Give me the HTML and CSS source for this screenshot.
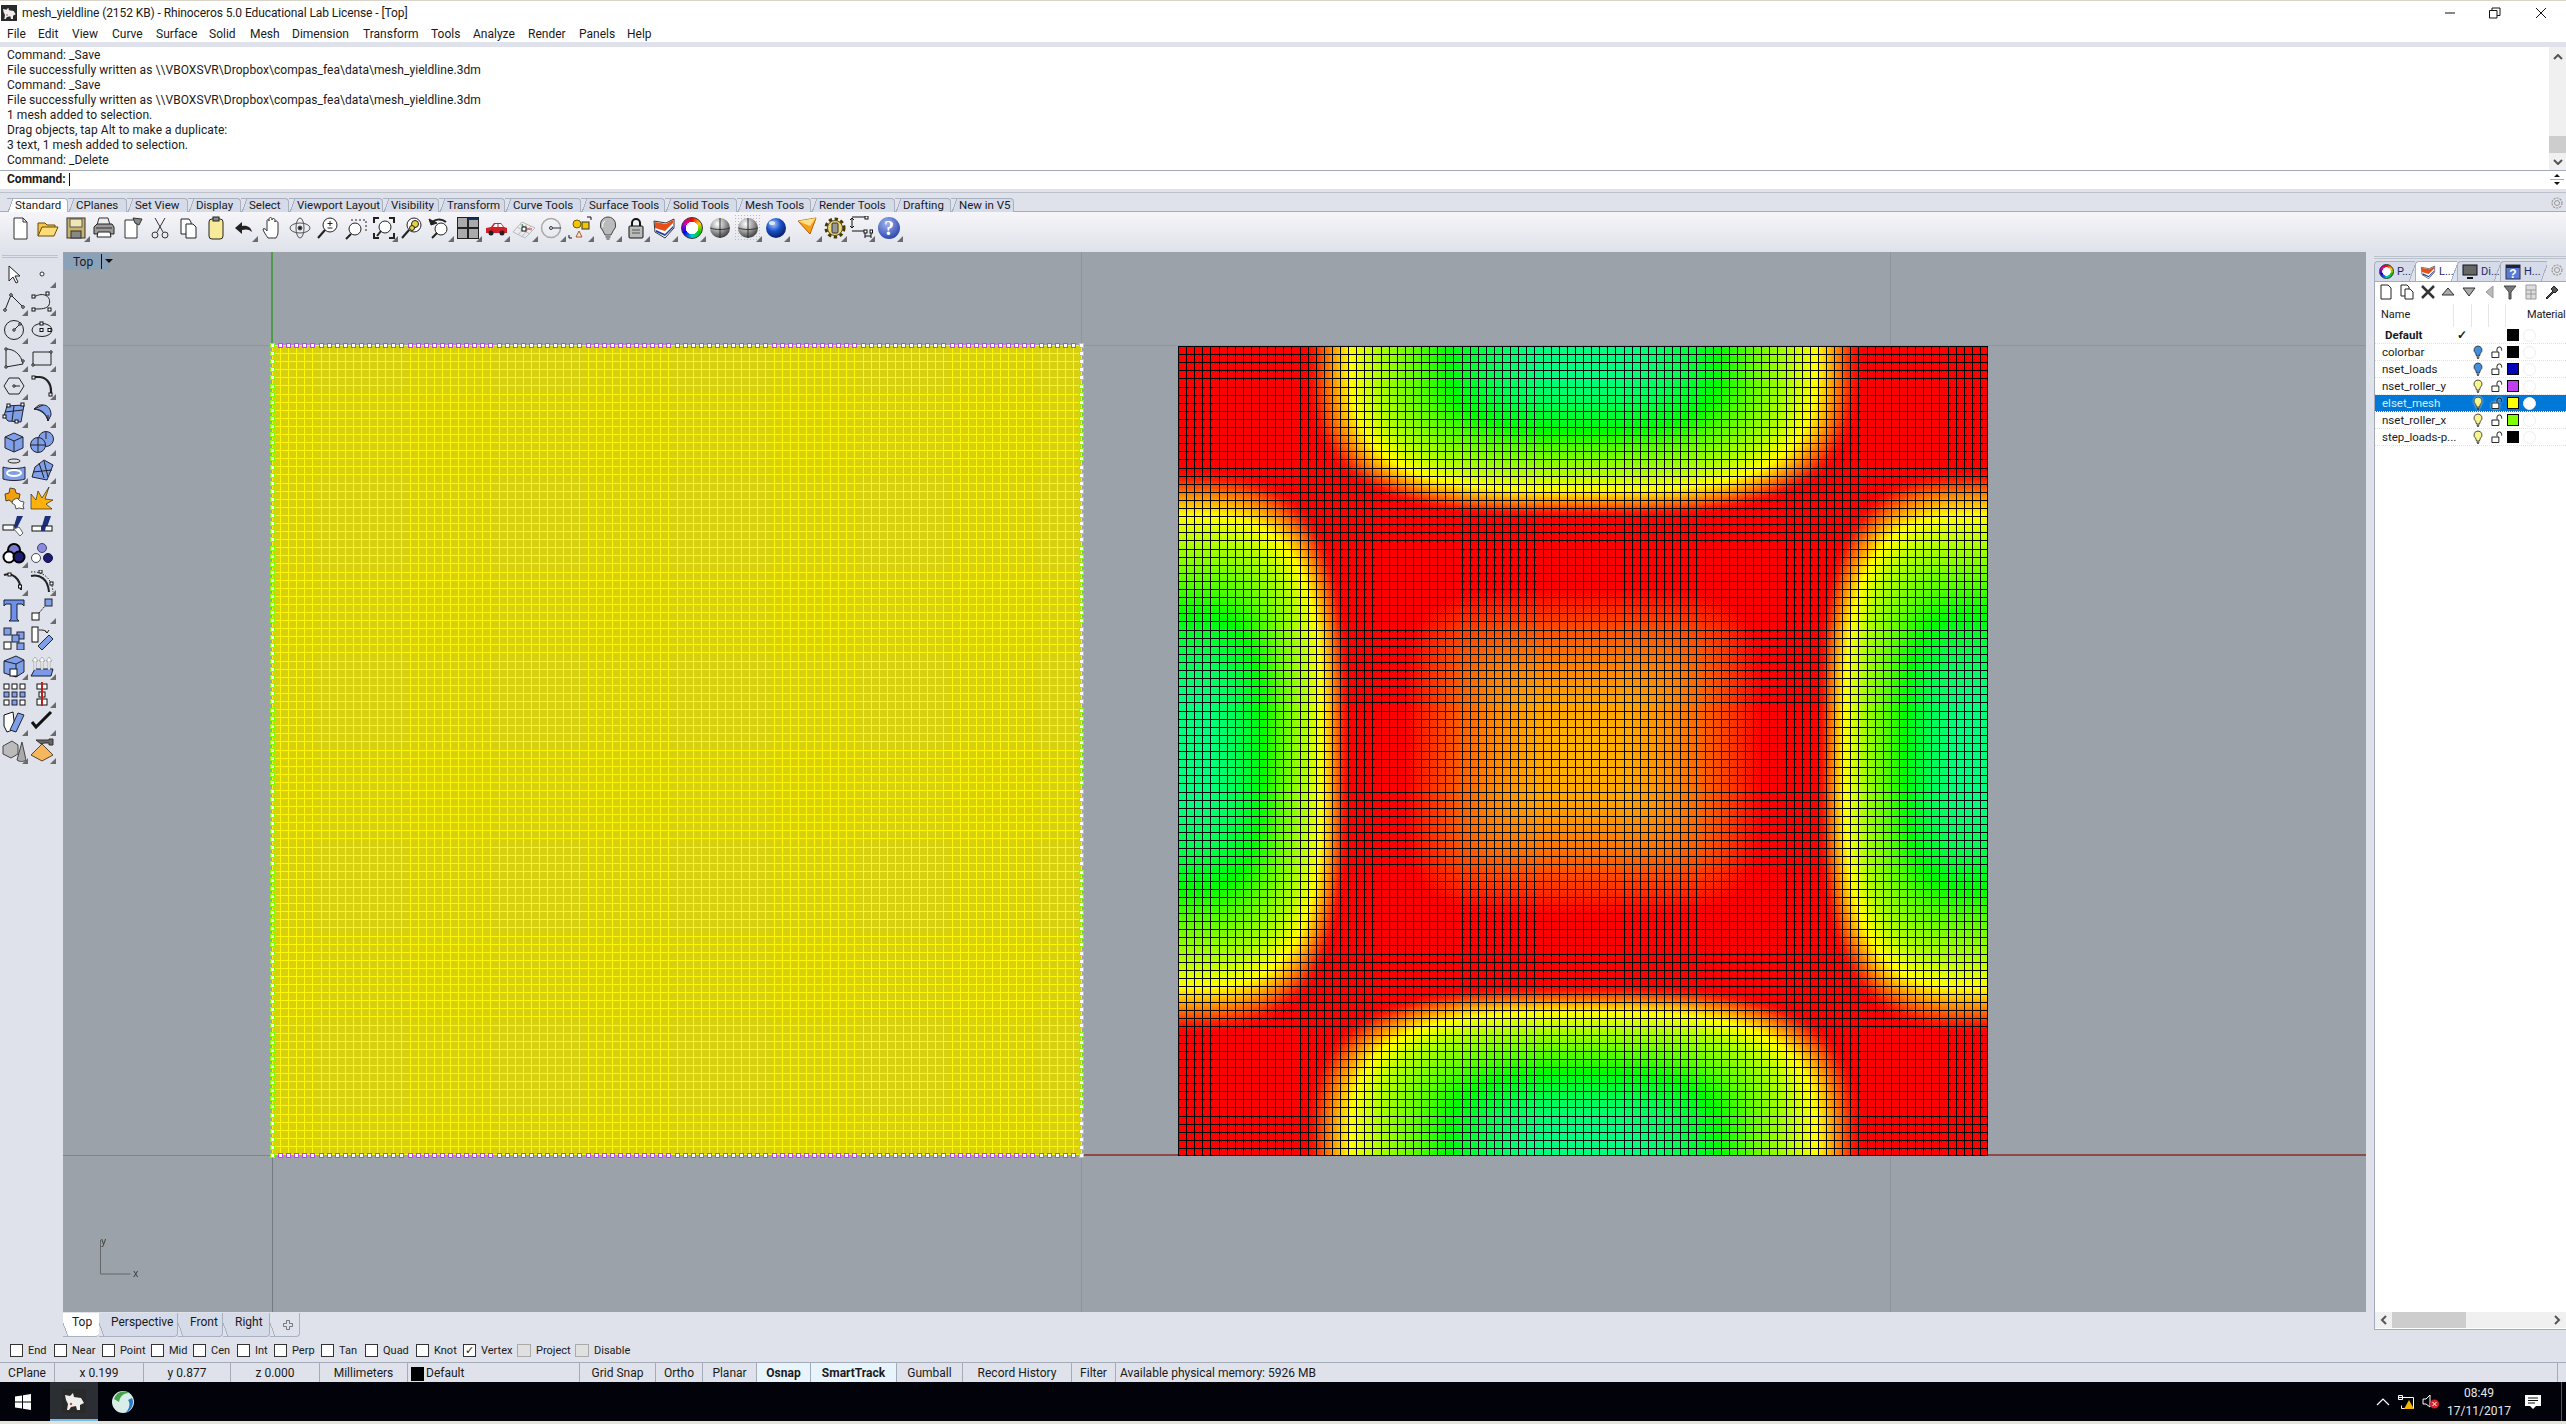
FILE: index.html
```html
<!DOCTYPE html>
<html lang="en">
<head>
  <meta charset="UTF-8" />
  <title>mesh_yieldline (2152 KB) - Rhinoceros 5.0 Educational Lab License - [Top]</title>
  <link rel="stylesheet" href="styles.css">
</head>
<body>
  <!-- shared gradients and repeated glyphs -->
  <svg class="defs" width="0" height="0">
    <defs>
      <radialGradient id="gs" cx=".38" cy=".3" r=".8"><stop offset="0" stop-color="#fff"/><stop offset=".5" stop-color="#9a9a9a"/><stop offset="1" stop-color="#2a2a2a"/></radialGradient>
      <radialGradient id="gb" cx=".38" cy=".3" r=".8"><stop offset="0" stop-color="#a8ccff"/><stop offset=".45" stop-color="#1a50c8"/><stop offset="1" stop-color="#04124c"/></radialGradient>
      <radialGradient id="gh" cx=".4" cy=".3" r=".8"><stop offset="0" stop-color="#9fb4f4"/><stop offset="1" stop-color="#1f3aa4"/></radialGradient>
      <symbol id="bulb" viewBox="0 0 10 14"><path d="M5 1a4 4 0 0 0-2.4 7.2L3.5 11h3L7.4 8.2A4 4 0 0 0 5 1z" stroke="#222" stroke-width=".8"/><path d="M3.7 12.2h2.600M4.2 13.400h1.600" stroke="#222" fill="none"/></symbol>
      <symbol id="lock" viewBox="0 0 13 13"><path d="M1 6.5h7.5V12.500H1z" fill="#fff" stroke="#111"/><path d="M6.5 6V3.500a2.500 2.500 0 0 1 5 0V5" fill="none" stroke="#111"/></symbol>
      <symbol id="rhino" viewBox="0 0 24 24"><rect width="24" height="24" fill="#2a2a2a"/><path d="M3 6l5 1 3-3 1 4 7 1 3 5-4 2v5h-3l-1-4-5 1-2 3H5l1-6-2-4z" fill="#eee"/><circle cx="9" cy="15" r="1.2" fill="#c44"/></symbol>
    </defs>
  </svg>

  <header class="titlebar">
    <svg class="app-icon" width="16" height="16"><use href="#rhino"/></svg>
    <span class="title-text">mesh_yieldline (2152 KB) - Rhinoceros 5.0 Educational Lab License - [Top]</span>
    <div class="win-controls">
      <svg width="12" height="12"><path d="M1 6h10" stroke="#111"/></svg>
      <svg width="12" height="12"><path d="M.5 3.5h7.5v7.5H.5zM3 3.500V1h8v7.500H8" fill="none" stroke="#111"/></svg>
      <svg width="12" height="12"><path d="M1 1l10 10M11 1L1 11" stroke="#111"/></svg>
    </div>
  </header>

  <nav class="menubar">
    <span>File</span><span>Edit</span><span>View</span><span>Curve</span><span>Surface</span><span>Solid</span><span>Mesh</span><span>Dimension</span><span>Transform</span><span>Tools</span><span>Analyze</span><span>Render</span><span>Panels</span><span>Help</span>
  </nav>

  <section class="console">
    <div class="console-log">
      <div>Command: _Save</div>
      <div>File successfully written as \\VBOXSVR\Dropbox\compas_fea\data\mesh_yieldline.3dm</div>
      <div>Command: _Save</div>
      <div>File successfully written as \\VBOXSVR\Dropbox\compas_fea\data\mesh_yieldline.3dm</div>
      <div>1 mesh added to selection.</div>
      <div>Drag objects, tap Alt to make a duplicate:</div>
      <div>3 text, 1 mesh added to selection.</div>
      <div>Command: _Delete</div>
    </div>
    <div class="vscroll">
      <svg width="10" height="6"><path d="M1 5l4-4 4 4" fill="none" stroke="#555" stroke-width="2"/></svg>
      <div class="vthumb"></div>
      <svg width="10" height="6"><path d="M1 1l4 4 4-4" fill="none" stroke="#555" stroke-width="2"/></svg>
    </div>
  </section>
  <div class="command-row">
    <b>Command:</b><i class="caret"></i>
    <div class="spinner"><svg width="14" height="16"><path d="M4 6l3-3 3 3zM4 11l3 3 3-3z" fill="#111"/><path d="M0 8.5h14" stroke="#aab"/></svg></div>
  </div>

  <div class="tabstrip">
    <span class="tab active">Standard</span><span class="tab">CPlanes</span><span class="tab">Set View</span><span class="tab">Display</span><span class="tab">Select</span><span class="tab">Viewport Layout</span><span class="tab">Visibility</span><span class="tab">Transform</span><span class="tab">Curve Tools</span><span class="tab">Surface Tools</span><span class="tab">Solid Tools</span><span class="tab">Mesh Tools</span><span class="tab">Render Tools</span><span class="tab">Drafting</span><span class="tab">New in V5</span>
    <svg class="gear" width="14" height="14" viewBox="0 0 14 14"><circle cx="7" cy="7" r="5" fill="none" stroke="#999" stroke-width="1.2" stroke-dasharray="2.2 1"/><circle cx="7" cy="7" r="2.5" fill="none" stroke="#999"/></svg>
  </div>

  <div class="toolbar">
    <span class="tool"><svg width="24" height="24"><path d="M6 2h9l4 4v17H6z" fill="#fff" stroke="#333"/><path d="M15 2v4h4" fill="none" stroke="#333"/></svg></span>
    <span class="tool"><svg width="24" height="24"><path d="M2 20V7h7l2 2h8v3" fill="#f4c64a" stroke="#6b4a00"/><path d="M2 20l4-9h16l-4 9z" fill="#fbdc78" stroke="#6b4a00"/></svg></span>
    <span class="tool fly"><svg width="24" height="24"><rect x="3" y="2" width="18" height="20" fill="#c9b26a" stroke="#333"/><rect x="6" y="3" width="12" height="8" fill="#efe6b8" stroke="#555"/><rect x="7" y="15" width="10" height="7" fill="#888" stroke="#333"/></svg></span>
    <span class="tool"><svg width="24" height="24"><path d="M7 2h9l2 7H5z" fill="#eee" stroke="#333"/><path d="M2 11l3-3h15l2 3v7H2z" fill="#999" stroke="#222"/><path d="M6 16h12l1 5H5z" fill="#fff" stroke="#222"/><path d="M4 12h16" stroke="#333"/></svg></span>
    <span class="tool"><svg width="24" height="24"><path d="M5 4h12v18H5z" fill="#fff" stroke="#333"/><path d="M13 2l9 1-3 6-4-2z" fill="#888" stroke="#333"/></svg></span>
    <span class="tool"><svg width="24" height="24" fill="none" stroke="#333"><path d="M7 2l8 14M17 2L9 16"/><circle cx="7" cy="19" r="3"/><circle cx="17" cy="19" r="3"/></svg></span>
    <span class="tool"><svg width="24" height="24"><path d="M5 3h8l2 3v12H5z" fill="#fff" stroke="#222"/><path d="M10 8h7l3 3v11H10z" fill="#fff" stroke="#222"/></svg></span>
    <span class="tool"><svg width="24" height="24"><rect x="5" y="3" width="14" height="20" rx="3" fill="#f7ea9a" stroke="#222"/><rect x="9" y="1" width="6" height="4" fill="#888" stroke="#222"/></svg></span>
    <span class="tool fly"><svg width="24" height="24"><path d="M3 12l7-6v4c5-1 9 1 10 6-3-3-6-3-10-2v4z" fill="#222"/></svg></span>
    <span class="tool"><svg width="24" height="24"><path d="M8 22c-2-3-5-7-5-9 1-1 3 0 4 2V5c0-2 2-2 2 0V3c0-2 3-2 3 0v1c0-2 3-2 3 0v2c0-2 3-1 3 1v9c0 3-1 4-2 6z" fill="#fff" stroke="#333"/></svg></span>
    <span class="tool"><svg width="24" height="24" fill="none" stroke="#555"><ellipse cx="12" cy="12" rx="10" ry="5"/><ellipse cx="12" cy="12" rx="4" ry="10"/><circle cx="12" cy="12" r="2" fill="#222"/></svg></span>
    <span class="tool"><svg width="24" height="24" fill="none" stroke="#222"><circle cx="14" cy="9" r="7" fill="#fff"/><path d="M9 14l-7 8" stroke-width="2"/><path d="M14 5v5M11.5 7.5h5M11.5 12h5" /></svg></span>
    <span class="tool"><svg width="24" height="24" fill="none" stroke="#222"><path d="M7 4h15v13" stroke-dasharray="2 2"/><circle cx="11" cy="13" r="6" fill="#fff"/><path d="M7 18l-5 5" stroke-width="2"/></svg></span>
    <span class="tool fly"><svg width="24" height="24" fill="none" stroke="#222"><path d="M2 7V2h5M17 2h5v5M22 17v5h-5M7 22H2v-5" stroke-width="2"/><circle cx="13" cy="11" r="6" fill="#fff"/><path d="M9 15l-4 5" stroke-width="2"/></svg></span>
    <span class="tool"><svg width="24" height="24" fill="none" stroke="#222"><circle cx="14" cy="9" r="7" fill="#fff"/><path d="M9 14l-7 8" stroke-width="2"/><circle cx="15" cy="8" r="3.5" fill="#e8d040"/><circle cx="12" cy="12" r="2.5" fill="#e8d040"/></svg></span>
    <span class="tool fly"><svg width="24" height="24" fill="none" stroke="#222"><circle cx="13" cy="13" r="6" fill="#fff"/><path d="M9 17l-5 5" stroke-width="2"/><path d="M3 8c3-5 10-6 15-2" stroke-width="2"/><path d="M1 3l2 6 6-2z" fill="#222"/></svg></span>
    <span class="tool fly"><svg width="24" height="24"><rect x="1.5" y="1.5" width="21" height="21" fill="#aaa" stroke="#222"/><path d="M12 1v22M1 12h22" stroke="#222" stroke-width="2"/><rect x="12" y="2" width="10" height="2" fill="#136"/></svg></span>
    <span class="tool fly"><svg width="24" height="24"><path d="M2 17v-5l5-1 3-4h7l3 4 3 1v5z" fill="#d0202a"/><path d="M11 8h2.5v3H9zM14.5 8H17l2 3h-4.500z" fill="#fff"/><circle cx="7" cy="17" r="2.5" fill="#222"/><circle cx="18" cy="17" r="2.5" fill="#222"/></svg></span>
    <span class="tool fly"><svg width="24" height="24" fill="none" stroke="#bbb"><path d="M1 16l9-10 13 6-10 10zM5 11l13 7M8 8.500l12 6M6 19l9-11M10 20.500L19 10"/><path d="M12 13h8" stroke="#d33"/><path d="M12 13l-2-5" stroke="#393"/><rect x="10" y="11" width="4" height="4" fill="#fff" stroke="#111"/></svg></span>
    <span class="tool fly"><svg width="24" height="24" fill="none" stroke="#888"><circle cx="11" cy="12" r="9.5" stroke="#aaa" stroke-width="1.5"/><circle cx="11" cy="12" r="1.5" stroke="#333"/><path d="M13 12h8" stroke="#333"/></svg></span>
    <span class="tool fly"><svg width="24" height="24"><circle cx="9" cy="8" r="4" fill="#f3c700" stroke="#7a5a00"/><rect x="14" y="6" width="7" height="7" fill="#f3c700" stroke="#333"/><path d="M11 15l3 6H8z" fill="none" stroke="#b4561c"/><path d="M19 1h4v3M1 19v3h3" fill="none" stroke="#111"/></svg></span>
    <span class="tool fly"><svg width="24" height="24"><path d="M12 1a8 8 0 0 0-5 14l2 4h6l2-4a8 8 0 0 0-5-14z" fill="#bbb" stroke="#444"/><path d="M9.5 21h5M10.500 23h3" stroke="#333"/><path d="M9 5c-2 1-3 4-2 6" stroke="#fff" fill="none"/></svg></span>
    <span class="tool fly"><svg width="24" height="24"><path d="M8 10V7a4 4 0 0 1 8 0v3" fill="none" stroke="#111" stroke-width="2"/><rect x="5" y="10" width="14" height="12" rx="1" fill="#bbb" stroke="#111"/><path d="M8 14h8M8 17h8" stroke="#555"/></svg></span>
    <span class="tool fly"><svg width="24" height="24"><path d="M2 5l12 2 8-4v9l-9 10-10-6z" fill="#fff" stroke="#333"/><path d="M3 6l11 2 7-4v3l-8 8-10-3z" fill="#e84e18"/><path d="M4 14l9 4 8-8v2l-8 8-9-4z" fill="#2040a0"/></svg></span>
    <span class="tool fly"><i class="wheel"></i></span>
    <span class="tool"><svg width="24" height="24"><circle cx="12" cy="12" r="10" fill="url(#gs)"/><path d="M12 2v20M2.5 12c5 2 14 2 19 0" stroke="#333" fill="none"/></svg></span>
    <span class="tool fly dotted"><svg width="24" height="24"><circle cx="12" cy="12" r="10" fill="url(#gs)"/><path d="M12 2v20M2.5 12c5 2 14 2 19 0" stroke="#333" fill="none"/></svg></span>
    <span class="tool fly"><svg width="24" height="24"><circle cx="12" cy="12" r="10" fill="url(#gb)"/><ellipse cx="8" cy="7" rx="3" ry="2" fill="#dbe8ff"/></svg></span>
    <span class="tool fly gap"><svg width="24" height="24"><path d="M2 5l18-3-6 16z" fill="#f6a019" stroke="#b45f00"/><path d="M2 5l18-3-6 8z" fill="#fbe08a"/></svg></span>
    <span class="tool fly narrow"><svg width="24" height="24" viewBox="0 0 24 24"><circle cx="12" cy="12" r="8" fill="#e8c84a" stroke="#4a3a00" stroke-width="5" stroke-dasharray="3 2.3"/><circle cx="12" cy="12" r="7.5" fill="#f0d870" stroke="#554"/><rect x="9" y="7" width="6" height="10" rx="1" fill="#999" stroke="#333"/></svg></span>
    <span class="tool fly"><svg width="24" height="24" fill="none" stroke="#111"><path d="M3 2v10M1 4l2-2 2 2M1 10l2 2 2-2"/><path d="M3 1h14M3 15h13M16 15v7M22 15v7M16 20h6"/><rect x="16" y="0" width="3" height="3" fill="#fff"/><rect x="15" y="14" width="3" height="3" fill="#fff"/><rect x="21" y="14" width="2.5" height="3" fill="#fff"/></svg></span>
    <span class="tool fly"><svg width="24" height="24"><circle cx="12" cy="12" r="11" fill="url(#gh)"/><text x="12" y="19" class="help-q">?</text></svg></span>
  </div>

  <main class="workspace">
    <aside class="sidebar">
      <div class="grip"></div>
      <div class="side-tools">
        <span class="tool"><svg width="24" height="24"><path d="M7 4v15l4-4 3 6 2-1-3-6h5z" fill="#fff" stroke="#222"/></svg></span>
        <span class="tool fly"><svg width="24" height="24"><circle cx="12" cy="12" r="2" fill="#fff" stroke="#333"/></svg></span>
        <span class="tool fly"><svg class="ln" width="24" height="24"><path d="M3 20L9 5l12 12"/><circle cx="3" cy="20" r="1.3" class="nd"/><circle cx="9" cy="5" r="1.3" class="nd"/><circle cx="21" cy="17" r="1.3" class="nd"/></svg></span>
        <span class="tool fly"><svg class="ln" width="24" height="24"><path d="M4 7c10-6 18 0 15 8-2 4-8 4-15 4"/><rect x="2" y="5" width="3" height="3" class="nd"/><rect x="16" y="2" width="3" height="3" class="nd"/><rect x="2" y="18" width="3" height="3" class="nd"/><rect x="18" y="18" width="3" height="3" class="nd"/></svg></span>
        <span class="tool fly"><svg class="ln" width="24" height="24"><circle cx="12" cy="12" r="9.5"/><path d="M12 12l6-6"/><circle cx="12" cy="12" r="1.2" class="nd"/><circle cx="18" cy="6" r="1.2" class="nd"/></svg></span>
        <span class="tool fly"><svg class="ln" width="24" height="24"><ellipse cx="12" cy="12" rx="10" ry="6.5"/><rect x="10" y="4" width="3" height="3" class="nd"/><rect x="10" y="10.5" width="3" height="3" class="nd"/><rect x="18" y="10.5" width="3" height="3" class="nd"/></svg></span>
        <span class="tool fly"><svg class="ln" width="24" height="24"><path d="M4 3c8 0 15 5 17 15L4 21z"/><circle cx="4" cy="3" r="1.2" class="nd"/><circle cx="21" cy="15" r="1.2" class="nd"/><circle cx="4" cy="21" r="1.2" class="nd"/></svg></span>
        <span class="tool fly"><svg class="ln" width="24" height="24"><path d="M3 6h18v13H3z"/><circle cx="3" cy="19" r="1.2" class="nd"/><circle cx="21" cy="6" r="1.2" class="nd"/></svg></span>
        <span class="tool fly"><svg class="ln" width="24" height="24"><path d="M7 4h10l5 8-5 8H7l-5-8z"/><path d="M12 12h6"/><circle cx="12" cy="12" r="1.2" class="nd"/></svg></span>
        <span class="tool fly"><svg class="ln" width="24" height="24"><path d="M4 3h5c7 0 12 6 12 14v3" stroke-width="2.2"/><rect x="2" y="2" width="3" height="3" class="nd"/><rect x="19" y="19" width="3" height="3" class="nd"/></svg></span>
        <span class="tool fly"><svg class="ln" width="24" height="24"><path d="M5 4l17-1-3 17-13-1L2 14z" class="bl"/><path d="M3 10l18-2M12 4l-2 15"/><rect x="5" y="2" width="3" height="3" class="nd"/><rect x="19" y="1" width="3" height="3" class="nd"/><rect x="1" y="13" width="3" height="3" class="nd"/><rect x="13" y="18" width="3" height="3" class="nd"/></svg></span>
        <span class="tool fly"><svg class="ln" width="24" height="24"><path d="M4 7l9-4c5 0 8 4 8 10l-3 6c-1-6-5-12-14-12z" class="bl"/><path d="M4 7l5-4 4 0M18 19V13M4 7c7 1 12 5 14 12"/></svg></span>
        <span class="tool fly"><svg class="ln" width="24" height="24"><path d="M3 7l9-4 9 4v11l-9 4-9-4z" class="bl"/><path d="M3 7l9 4 9-4M12 11v11"/></svg></span>
        <span class="tool fly"><svg class="ln" width="24" height="24"><circle cx="16" cy="9" r="7.5" class="bl"/><circle cx="8" cy="15" r="7.5" class="bl"/><path d="M.5 15h15M8 8v14M16 2v7"/></svg></span>
        <span class="tool fly"><svg class="ln" width="24" height="24"><ellipse cx="12" cy="3" rx="6" ry="2"/><path d="M1 9c6 2 16 2 22 0v12c-6 2-16 2-22 0z" class="bl"/><ellipse cx="12" cy="15" rx="7" ry="3" stroke="#fff" stroke-width="2"/></svg></span>
        <span class="tool fly"><svg class="ln" width="24" height="24"><path d="M5 9l9-7 9 5-6 15L2 19z" class="bl"/><path d="M3 14l19-2M9 5l5 15M14 3l4 16"/></svg></span>
        <span class="tool"><svg width="24" height="24"><path d="M3 8l4-1 1-5 5 1 1 4 4 1-1 5-4 1-2 3-4-3-3 1z" fill="#f0a010" stroke="#543"/><path d="M11 14l4-2 3 3 4 1-1 4 1 3-5-1-3 1-1-4-3-2z" fill="#fff" stroke="#555"/></svg></span>
        <span class="tool"><svg width="24" height="24"><path d="M1 23V8l5 6 2-9 4 7 7-11-4 12 8 1-7 4 6 5z" fill="#fdb10a" stroke="#111" stroke-width=".6"/></svg></span>
        <span class="tool"><svg width="24" height="24"><path d="M12 12l3-10h6l-7 14z" fill="#1c2f7a"/><rect x="1" y="11" width="11" height="5" fill="#fff" stroke="#111"/><path d="M12 15l5-2 4 6-3 3z" fill="#fff" stroke="#666"/></svg></span>
        <span class="tool"><svg width="24" height="24"><path d="M12 12l3-10h6l-5 14h-5z" fill="#1c2f7a"/><rect x="2" y="12" width="20" height="5" fill="#fff" stroke="#111"/><path d="M11 12h5l-1 5h-4z" fill="#1c2f7a"/></svg></span>
        <span class="tool fly"><svg width="24" height="24"><circle cx="12" cy="8" r="6" fill="#7a7ad0" stroke="#000" stroke-width="2"/><circle cx="7" cy="15" r="5.5" fill="#fff" stroke="#000" stroke-width="2"/><circle cx="17" cy="15" r="5.5" fill="#1c1c70" stroke="#000" stroke-width="2"/></svg></span>
        <span class="tool"><svg width="24" height="24"><circle cx="12" cy="6" r="4.5" fill="#8a8ae0" stroke="#446"/><circle cx="6" cy="16" r="4.5" fill="#fff" stroke="#446"/><circle cx="18" cy="16" r="4.5" fill="#1c1c70" stroke="#114"/></svg></span>
        <span class="tool fly"><svg class="ln" width="24" height="24"><path d="M2 5c8-3 16 3 17 15" stroke-width="2"/><rect x="6" y="3" width="3" height="3" class="nd"/><rect x="16.5" y="15" width="3" height="3" class="nd"/></svg></span>
        <span class="tool fly"><svg class="ln" width="24" height="24"><path d="M1 6c9-2 17 3 18 16" stroke-width="2"/><path d="M1 2c9-1 21 4 22 20" stroke-dasharray="1.5 1.5"/><rect x="9" y="0" width="3" height="3" class="nd"/><rect x="20" y="12" width="3" height="3" class="nd"/></svg></span>
        <span class="tool"><svg width="24" height="24"><path d="M2 2h20v6l-2-2h-5v15l2 2H7l2-2V6H4L2 8z" fill="#6f90ea" stroke="#123"/></svg></span>
        <span class="tool fly"><svg class="ln" width="24" height="24"><rect x="15" y="1" width="7" height="7" class="bl"/><rect x="2" y="15" width="7" height="7" class="nd"/><path d="M9 15l6-7" stroke-dasharray="2 1"/></svg></span>
        <span class="tool"><svg class="ln" width="24" height="24"><rect x="2" y="2" width="7" height="7" class="bl"/><rect x="15" y="6" width="7" height="7" class="bl"/><rect x="10" y="9" width="7" height="7" class="bl"/><rect x="2" y="16" width="7" height="7" class="nd"/><rect x="15" y="17" width="7" height="7" class="bl"/></svg></span>
        <span class="tool"><svg class="ln" width="24" height="24"><rect x="2" y="1" width="6" height="15" class="nd"/><path d="M9 4c4 0 7 0 8 3M15 5l2 2 2-3"/><path d="M8 20L19 9l4 4-11 11z" class="bl"/></svg></span>
        <span class="tool fly"><svg class="ln" width="24" height="24"><path d="M2 7l12-5 8 4v12l-8 5-12-4z" class="bl"/><path d="M2 7l12 3 8-4M14 10v13"/><rect x="8" y="15" width="7" height="7" class="nd"/></svg></span>
        <span class="tool fly"><svg width="24" height="24"><path d="M1 22l4-7h18l-2 7z" fill="#7a9aec" stroke="#123"/><path d="M5 3l-3 4h2v9h2V7h2zM12 3L9 7h2v9h2V7h2zM19 3l-3 4h2v9h2V7h2z" fill="#fff" stroke="#777" stroke-width=".5"/></svg></span>
        <span class="tool"><svg class="ln" width="24" height="24"><rect x="2" y="2" width="5" height="5" class="nd"/><rect x="10" y="2" width="5" height="5" class="nd"/><rect x="18" y="2" width="5" height="5" class="nd"/><rect x="2" y="10" width="5" height="5" class="bl"/><rect x="10" y="10" width="5" height="5" class="bl"/><rect x="18" y="10" width="5" height="5" class="bl"/><rect x="2" y="18" width="5" height="5" class="nd"/><rect x="10" y="18" width="5" height="5" class="bl"/><rect x="18" y="18" width="5" height="5" class="nd"/></svg></span>
        <span class="tool fly"><svg class="ln" width="24" height="24"><rect x="7" y="2" width="10" height="5" class="nd"/><rect x="9" y="10" width="6" height="5" class="nd"/><rect x="7" y="17" width="10" height="6" class="nd"/><path d="M12 0v24" stroke="#c0201c" stroke-width="2"/></svg></span>
        <span class="tool fly"><svg class="ln" width="24" height="24"><path d="M2 5l9-3 2 17-8 3-3-6z" class="nd"/><path d="M8 20L16 3l6 2-8 17z" class="bl"/></svg></span>
        <span class="tool fly"><svg class="ln" width="24" height="24"><path d="M2 12l4 5L21 2" stroke="#111" stroke-width="3"/></svg></span>
        <span class="tool fly"><svg width="24" height="24"><path d="M1 8l9-5 6 4v9l-7 4-8-4z" fill="#bbb" stroke="#444"/><path d="M15 22l5-18 4 18c-3 2-6 2-9 0z" fill="#aaa" stroke="#444"/></svg></span>
        <span class="tool fly"><svg width="24" height="24"><path d="M1 17L12 6l11 11-11 6z" fill="#f6b65e" stroke="#543"/><path d="M11 6L6 2h13v-1h4v6h-4V5h-5z" fill="#666" stroke="#333"/></svg></span>
      </div>
    </aside>

    <div class="center">
      <div class="viewport">
        <canvas id="view" width="2303" height="1060"></canvas>
        <div class="view-label"><span>Top</span><i class="view-drop"></i></div>
        <svg class="axes" width="44" height="44"><path d="M5.5 3v34h30" fill="none" stroke="#666"/></svg>
        <span class="axis-y">y</span>
        <span class="axis-x">x</span>
      </div>
      <div class="view-tabs">
        <span class="vtab active">Top</span><span class="vtab">Perspective</span><span class="vtab">Front</span><span class="vtab">Right</span>
        <span class="vtab plus"><svg width="10" height="10"><path d="M3.5.5h3v3h3v3h-3v3h-3v-3h-3v-3h3z" fill="none" stroke="#777"/></svg></span>
      </div>
    </div>

    <aside class="panel">
      <div class="panel-grip"></div>
      <div class="panel-tabs">
        <span class="ptab"><i class="wheel small"></i><b>P...</b></span>
        <span class="ptab active"><svg width="16" height="16" viewBox="0 0 24 24"><path d="M2 5l12 2 8-4v9l-9 10-10-6z" fill="#fff" stroke="#333"/><path d="M3 6l11 2 7-4v3l-8 8-10-3z" fill="#e84e18"/><path d="M4 14l9 4 8-8v2l-8 8-9-4z" fill="#2040a0"/></svg><b>L...</b></span>
        <span class="ptab"><svg width="16" height="16"><rect x="1" y="1" width="14" height="10" fill="#666" stroke="#111"/><path d="M5 14h6" stroke="#111" stroke-width="2"/></svg><b>Di...</b></span>
        <span class="ptab"><svg width="16" height="16"><rect x="1" y="1" width="14" height="14" fill="#5a7ad8" stroke="#334"/><rect x="1" y="1" width="14" height="3" fill="#223"/><text x="8" y="14" class="help-s">?</text></svg><b>H...</b></span>
        <svg class="gear" width="14" height="14" viewBox="0 0 14 14"><circle cx="7" cy="7" r="5" fill="none" stroke="#999" stroke-width="1.2" stroke-dasharray="2.2 1"/><circle cx="7" cy="7" r="2.5" fill="none" stroke="#999"/></svg>
      </div>
      <div class="panel-body">
        <div class="layer-tools">
          <svg width="14" height="16"><path d="M2 1h7l3 3v11H2z" fill="#fff" stroke="#222"/></svg>
          <svg width="14" height="16"><path d="M1 1h6l2 2v9H1z" fill="#fff" stroke="#222"/><path d="M5 5h5l3 3v7H5z" fill="#fff" stroke="#222"/></svg>
          <svg width="14" height="16"><path d="M1 2l12 12M13 2L1 14" stroke="#333" stroke-width="2.5"/></svg>
          <svg width="14" height="16"><path d="M1 11l6-7 6 7z" fill="#aaa" stroke="#333"/></svg>
          <svg width="14" height="16"><path d="M1 4l6 8 6-8z" fill="#aaa" stroke="#333"/></svg>
          <svg width="14" height="16"><path d="M10 2v12L3 8z" fill="#bbb" stroke="#999"/></svg>
          <svg width="14" height="16"><path d="M1 2h12L8 8v7H6V8z" fill="#777" stroke="#444"/></svg>
          <svg width="14" height="16"><path d="M2 1h10v14H2zM2 6h10M7 6v9M2 10h10" fill="#ddd" stroke="#999"/></svg>
          <svg width="14" height="16"><path d="M1 14l7-7-2-2 3-3 4 4-3 3-1-1-7 7z" fill="#555" stroke="#222"/></svg>
        </div>
        <div class="layer-head">
          <span>Name</span><i></i><i></i><i></i><i></i><span>Material</span>
        </div>
        <div class="layer default"><span>Default</span><em>&#10003;</em><i></i><i></i><u class="sw black"></u><s></s></div>
        <div class="layer"><span>colorbar</span><i></i><svg class="on blue" width="10" height="14"><use href="#bulb"/></svg><svg width="12" height="12"><use href="#lock"/></svg><u class="sw black"></u><s></s></div>
        <div class="layer"><span>nset_loads</span><i></i><svg class="on blue" width="10" height="14"><use href="#bulb"/></svg><svg width="12" height="12"><use href="#lock"/></svg><u class="sw navy"></u><s></s></div>
        <div class="layer"><span>nset_roller_y</span><i></i><svg class="on" width="10" height="14"><use href="#bulb"/></svg><svg width="12" height="12"><use href="#lock"/></svg><u class="sw purple"></u><s></s></div>
        <div class="layer selected"><span>elset_mesh</span><i></i><svg class="on" width="10" height="14"><use href="#bulb"/></svg><svg width="12" height="12"><use href="#lock"/></svg><u class="sw yellow"></u><s></s></div>
        <div class="layer"><span>nset_roller_x</span><i></i><svg class="on" width="10" height="14"><use href="#bulb"/></svg><svg width="12" height="12"><use href="#lock"/></svg><u class="sw lime"></u><s></s></div>
        <div class="layer"><span>step_loads-p...</span><i></i><svg class="on" width="10" height="14"><use href="#bulb"/></svg><svg width="12" height="12"><use href="#lock"/></svg><u class="sw black"></u><s></s></div>
        <div class="hscroll">
          <svg width="10" height="10"><path d="M7 1L3 5l4 4" fill="none" stroke="#555" stroke-width="2"/></svg>
          <div class="hthumb"></div>
          <svg class="push" width="10" height="10"><path d="M3 1l4 4-4 4" fill="none" stroke="#555" stroke-width="2"/></svg>
        </div>
      </div>
    </aside>
  </main>

  <div class="osnap">
    <label><i class="box"></i>End</label><label><i class="box"></i>Near</label><label><i class="box"></i>Point</label><label><i class="box"></i>Mid</label><label><i class="box"></i>Cen</label><label><i class="box"></i>Int</label><label><i class="box"></i>Perp</label><label><i class="box"></i>Tan</label><label><i class="box"></i>Quad</label><label><i class="box"></i>Knot</label><label><i class="box checked">&#10003;</i>Vertex</label><label><i class="box off"></i>Project</label><label><i class="box off"></i>Disable</label>
  </div>

  <footer class="status">
    <span>CPlane</span><span>x 0.199</span><span>y 0.877</span><span>z 0.000</span><span>Millimeters</span>
    <span class="layer-cell"><i class="cur-layer"></i>Default</span>
    <span>Grid Snap</span><span>Ortho</span><span>Planar</span><span class="lit">Osnap</span><span class="lit">SmartTrack</span><span>Gumball</span><span>Record History</span><span>Filter</span>
    <span class="memory">Available physical memory: 5926 MB</span>
    <span></span>
  </footer>

  <div class="taskbar">
    <svg class="win-logo" width="16" height="16"><path d="M0 2.5l7-1v6H0zM8 1.300L16 0v7.500H8zM0 8.500h7v6l-7-1zM8 8.500h8V16l-8-1.200z" fill="#fff"/></svg>
    <div class="task-btn"><svg width="24" height="24"><use href="#rhino"/></svg></div>
    <svg class="globe" width="24" height="24"><circle cx="12" cy="12" r="11" fill="#d8ece8"/><path d="M3 9a10 10 0 0 1 15-6c-5 0-9 3-10 9z" fill="#4aa04a"/><path d="M21 8c3 6-1 13-7 15 4-3 6-9 3-13z" fill="#2a78c8"/></svg>
    <div class="tray">
      <svg width="14" height="9"><path d="M1 8l6-6 6 6" fill="none" stroke="#fff" stroke-width="1.2"/></svg>
      <svg width="18" height="16"><path d="M1.5 3.5h15v11h-12v-3M1.500 1.500h4v4h-4z" fill="none" stroke="#fff"/><path d="M12 6l5 9H7z" fill="#f4b400"/></svg>
      <svg width="18" height="16"><path d="M1 5h3l4-4v12L4 10H1z" fill="none" stroke="#fff"/><circle cx="12.5" cy="10" r="4.5" fill="#d8202c"/><path d="M10.5 8l4 4M14.500 8l-4 4" stroke="#fff"/></svg>
      <div class="clock"><div>08:49</div><div>17/11/2017</div></div>
      <svg class="notify" width="16" height="16"><path d="M0 1h16v11h-5l-3 3-3-3H0z" fill="#fff"/><path d="M3 4h10M3 6.500h10M3 9h7" stroke="#111"/></svg>
      <i class="show-desktop"></i>
    </div>
  </div>
  <div class="screen-edge"></div>

  <script src="main.js"></script>
</body>
</html>
```
FILE: styles.css
```css
* {
  box-sizing: border-box;
}

html, body {
  margin: 0;
  padding: 0;
  height: 100%;
}

body {
  display: flex;
  flex-direction: column;
  overflow: hidden;
  background: #dfe2ea;
  font-family: 'Roboto', 'Liberation Sans', sans-serif;
  font-size: 12px;
  color: #1a1a1a;
}

i, em, u, s {
  font-style: normal;
  text-decoration: none;
}

.defs {
  position: absolute;
}

/* title + menu */
.titlebar {
  display: flex;
  align-items: center;
  height: 24px;
  padding-left: 1px;
  background: #fff;
  border-top: 1px solid #d8d5c8;
  flex: none;
}

.title-text {
  margin-left: 5px;
  letter-spacing: -.09px;
}

.win-controls {
  display: grid;
  grid-template-columns: 45px 46px 46px;
  justify-items: center;
  margin-left: auto;
  margin-right: 2px;
}

.menubar {
  display: grid;
  grid-template-columns: 31px 34px 40px 44px 53px 41px 42px 71px 68px 42px 55px 51px 48px 30px;
  height: 18px;
  line-height: 20px;
  padding-left: 7px;
  background: #fff;
  flex: none;
}

/* command area */
.console {
  display: flex;
  height: 124px;
  margin-top: 5px;
  background: #fff;
  border-bottom: 1px solid #a4abb8;
  flex: none;
}

.console-log {
  flex: 1;
  padding: 1px 0 0 7px;
  line-height: 15px;
  letter-spacing: .06px;
}

.vscroll {
  display: flex;
  flex-direction: column;
  align-items: center;
  justify-content: space-between;
  width: 17px;
  padding: 7px 0 5px;
  background: #f0f0f0;
}

.vthumb {
  width: 100%;
  height: 17px;
  margin-top: auto;
  margin-bottom: 6px;
  background: #cdcdcd;
}

.command-row {
  display: flex;
  align-items: center;
  height: 18px;
  padding: 0 0 2px 7px;
  background: #fff;
  flex: none;
}

.caret {
  width: 1px;
  height: 13px;
  margin-left: 3px;
  background: #111;
}

.spinner {
  margin-left: auto;
  margin-right: 2px;
  height: 16px;
}

/* toolbar tabs */
.tabstrip {
  display: grid;
  grid-template-columns: 61px 59px 61px 53px 48px 94px 56px 66px 76px 84px 72px 74px 84px 56px 63px 1fr;
  height: 20px;
  margin-top: 3px;
  padding: 5px 0 0 7px;
  font-size: 11.5px;
  line-height: 12px;
  border-top: 1px solid #bcc2cc;
  border-bottom: 1px solid #a4abb8;
  flex: none;
}

.tab {
  padding-left: 8px;
  white-space: nowrap;
  border-top: 1px solid #a9b0c0;
  border-right: 1px solid #a9b0c0;
  border-radius: 0 4px 0 0;
  background: linear-gradient(110deg, transparent 5px, #a9b0c0 5px, #a9b0c0 6px, #d6dbea 6px);
}

.tab.active {
  background: linear-gradient(110deg, transparent 5px, #a9b0c0 5px, #a9b0c0 6px, #fff 6px);
  height: 15px;
}

.gear {
  justify-self: end;
  margin-right: 2px;
  margin-top: -2px;
}

.toolbar {
  display: flex;
  align-items: center;
  height: 40px;
  padding: 0 0 9px 6px;
  background: linear-gradient(#f6f6f9, #dfe2ea);
  flex: none;
}

.tool {
  position: relative;
  display: flex;
  align-items: center;
  justify-content: center;
  width: 28px;
  height: 28px;
  flex: none;
}

.tool.gap {
  margin-left: 4px;
}

.tool.narrow {
  width: 25px;
}

.tool.dotted {
  background: radial-gradient(#bbb 1px, transparent 1px) 0 0 / 3px 3px;
}

/* little flyout corner on tool buttons */
.tool.fly::after {
  content: '';
  position: absolute;
  right: 0;
  bottom: 0;
  border-style: solid;
  border-width: 0 0 6px 6px;
  border-color: transparent transparent #6b6b6b transparent;
}

.wheel {
  display: block;
  width: 22px;
  height: 22px;
  border-radius: 50%;
  background: radial-gradient(#fff 0 6px, transparent 6.5px), conic-gradient(#f00, #fc0, #0c0, #0cc, #00f, #c0c, #f00);
  border: 1px solid #333;
}

.wheel.small {
  width: 15px;
  height: 15px;
  background: radial-gradient(#fff 0 4px, transparent 4.5px), conic-gradient(#f00, #fc0, #0c0, #0cc, #00f, #c0c, #f00);
}

.help-q {
  font: bold 20px 'Liberation Serif', serif;
  fill: #fff;
  text-anchor: middle;
}

.help-s {
  font: bold 12px 'Liberation Sans', sans-serif;
  fill: #fff;
  text-anchor: middle;
}

.ln {
  fill: none;
  stroke: #222;
}

.ln .nd {
  fill: #fff;
  stroke: #111;
}

.ln .bl {
  fill: #7f9fe8;
  stroke: #223;
}

/* main area */
.workspace {
  display: flex;
  height: 1088px;
  flex: none;
}

.sidebar {
  width: 63px;
  padding-top: 3px;
  flex: none;
}

.grip {
  height: 3px;
  margin: 0 5px 2px 2px;
  border-top: 1px solid #bcc2cc;
  border-bottom: 1px solid #bcc2cc;
}

.side-tools {
  display: grid;
  grid-template-columns: 28px 28px;
  grid-auto-rows: 28px;
}

.center {
  width: 2303px;
  flex: none;
}

.viewport {
  position: relative;
  height: 1060px;
}

#view {
  display: block;
}

.view-label {
  position: absolute;
  top: 1px;
  left: 1px;
  display: flex;
  align-items: center;
  width: 46px;
  height: 17px;
  padding-left: 9px;
  background: #8ba1b8;
}

.view-drop {
  position: relative;
  width: 14px;
  height: 15px;
  margin-left: 8px;
  border-left: 1px solid #111;
}

.view-drop::after {
  content: '';
  position: absolute;
  top: 5px;
  left: 3px;
  border-style: solid;
  border-width: 4px 4px 0 4px;
  border-color: #111 transparent transparent transparent;
}

.axes {
  position: absolute;
  left: 32px;
  top: 985px;
}

.axis-y, .axis-x {
  position: absolute;
  font-size: 11px;
  color: #444;
}

.axis-y {
  left: 38px;
  top: 983px;
}

.axis-x {
  left: 70px;
  top: 1015px;
}

.view-tabs {
  display: grid;
  grid-template-columns: 36px 79px 45px 47px 30px;
  height: 21px;
  margin-top: 1px;
  line-height: 19px;
}

.vtab {
  padding-left: 12px;
  white-space: nowrap;
  border-right: 1px solid #a9b0c0;
  border-bottom: 1px solid #a9b0c0;
  border-radius: 0 0 4px 0;
  background: linear-gradient(70deg, transparent 4px, #a9b0c0 4px, #a9b0c0 5px, #d6dbea 5px);
}

.vtab.active {
  background: linear-gradient(70deg, transparent 4px, #a9b0c0 4px, #a9b0c0 5px, #fff 5px);
  padding-left: 9px;
  border-right: none;
}

.vtab.plus {
  background: linear-gradient(70deg, transparent 4px, #a9b0c0 4px, #a9b0c0 5px, transparent 5px);
  padding: 4px 0 0 13px;
}

/* layers panel */
.panel {
  width: 200px;
  padding-left: 8px;
  padding-top: 4px;
  flex: none;
}

.panel-grip {
  height: 3px;
  border-top: 1px solid #bcc2cc;
  border-bottom: 1px solid #bcc2cc;
}

.panel-tabs {
  display: grid;
  grid-template-columns: 41px 42px 43px 47px 1fr;
  height: 20px;
  margin-top: 2px;
}

.ptab {
  display: flex;
  align-items: center;
  gap: 3px;
  padding-left: 4px;
  font-size: 11px;
  border-top: 1px solid #a9b0c0;
  border-left: 1px solid #a9b0c0;
  border-radius: 4px 0 0 0;
  background: linear-gradient(110deg, #d6dbea calc(100% - 6px), #a9b0c0 calc(100% - 6px), #a9b0c0 calc(100% - 5px), transparent calc(100% - 5px));
}

.ptab b {
  font-weight: 400;
  color: #1a2a66;
  white-space: nowrap;
}

.ptab.active {
  background: linear-gradient(110deg, #fff calc(100% - 6px), #a9b0c0 calc(100% - 6px), #a9b0c0 calc(100% - 5px), transparent calc(100% - 5px));
}

.panel-tabs .gear {
  margin-top: 2px;
}

.panel-body {
  display: flex;
  flex-direction: column;
  height: 1049px;
  background: #fff;
  border: 1px solid #a4abb8;
  border-right: none;
}

.layer-tools {
  display: grid;
  grid-template-columns: repeat(9, 20.7px);
  height: 19px;
  padding: 2px 0 0 1px;
  justify-items: center;
}

.layer-head {
  display: grid;
  grid-template-columns: 78px 18px 17px 17px 17px 1fr;
  height: 23px;
  margin-top: 3px;
  line-height: 22px;
  font-size: 11px;
}

.layer-head span:first-child {
  padding-left: 6px;
}

.layer-head span:last-child {
  padding-left: 5px;
  white-space: nowrap;
  letter-spacing: -.2px;
}

.layer-head i {
  border-left: 1px solid #e6e6e6;
}

.layer {
  display: grid;
  grid-template-columns: 78px 18px 14px 23px 10px 1fr;
  align-items: center;
  justify-items: center;
  height: 17px;
  font-size: 11.5px;
  border-bottom: 1px dotted #e2e2e2;
}

.layer span {
  justify-self: start;
  padding-left: 7px;
  white-space: nowrap;
}

.layer.default span {
  padding-left: 10px;
  font-weight: 700;
}

.layer em {
  font-size: 12px;
  font-weight: 700;
}

.layer .on {
  fill: #f6f68c;
}

.layer .on.blue {
  fill: #3f8fe0;
}

.sw {
  width: 12px;
  height: 12px;
  border: 1px solid #000;
}

.sw.black { background: #000; }
.sw.navy { background: #0000b8; }
.sw.purple { background: #c040f0; }
.sw.yellow { background: #ffff00; }
.sw.lime { background: #80ff00; }

.layer s {
  justify-self: start;
  width: 13px;
  height: 13px;
  margin-left: 5px;
  border-radius: 50%;
  border: 1px solid #eee;
}

.layer.selected {
  background: #0078d7;
  color: #dce9f7;
  border-bottom: 1px dotted #fff;
}

.layer.selected s {
  background: #fff;
}

.layer.selected svg {
  filter: drop-shadow(0 0 1px #fff);
}

.hscroll {
  display: flex;
  align-items: center;
  height: 16px;
  margin-top: auto;
  margin-bottom: 1px;
  padding: 0 4px;
  background: #f0f0f0;
}

.hthumb {
  width: 74px;
  height: 16px;
  margin-left: 3px;
  background: #cdcdcd;
}

.hscroll .push {
  margin-left: auto;
}

/* object snaps */
.osnap {
  display: grid;
  grid-template-columns: 44px 48px 49px 42px 44px 37px 47px 44px 51px 47px 54px 58px 80px;
  align-items: center;
  height: 22px;
  padding: 0 0 2px 10px;
  font-size: 11px;
  flex: none;
}

.osnap label {
  display: flex;
  align-items: center;
  gap: 5px;
  white-space: nowrap;
}

.box {
  display: block;
  width: 13px;
  height: 13px;
  background: #fff;
  border: 1px solid #333;
  font-size: 11px;
  line-height: 11px;
  text-align: center;
}

.box.off {
  width: 14px;
  background: #e0e0e0;
  border-color: #aaa;
}

/* status bar */
.status {
  display: grid;
  grid-template-columns: 55px 89px 87px 89px 88px 172px 76px 47px 54px 54px 86px 66px 109px 44px 1fr 8px;
  height: 20px;
  border-top: 1px solid #a4abb8;
  line-height: 21px;
  flex: none;
}

.status span {
  text-align: center;
  white-space: nowrap;
  border-right: 1px solid #a4abb8;
}

.status .lit {
  font-weight: 700;
  background: #e8f4fc;
}

.status .layer-cell {
  display: flex;
  align-items: center;
  gap: 2px;
  padding-left: 3px;
}

.status .memory {
  text-align: left;
  padding-left: 4px;
}

.status span:last-child {
  border-right: none;
}

.cur-layer {
  width: 13px;
  height: 14px;
  background: #000;
}

/* windows taskbar */
.taskbar {
  display: flex;
  align-items: center;
  height: 39px;
  padding-left: 15px;
  background: #02030a;
  flex: none;
}

.task-btn {
  display: flex;
  align-items: center;
  justify-content: center;
  width: 48px;
  height: 39px;
  margin-left: 19px;
  background: #2b2f33;
  border-bottom: 2px solid #76b9ed;
}

.globe {
  margin-left: 13px;
}

.tray {
  display: flex;
  align-items: center;
  margin-left: auto;
  gap: 7px;
  color: #e8e8e8;
}

.clock {
  width: 64px;
  text-align: center;
  white-space: nowrap;
  line-height: 18px;
}

.notify {
  margin-left: 7px;
}

.show-desktop {
  width: 1px;
  height: 39px;
  margin-left: 13px;
  margin-right: 4px;
  background: #555;
}

.screen-edge {
  height: 3px;
  background: #e5e2d8;
  flex: none;
}
```
FILE: main.js
```js
// viewport drawing: grid lines, the selected yellow mesh and the analysis mesh
const canvas = document.getElementById('view');
const ctx = canvas.getContext('2d');
const OX = 63;
const OY = 252;

function line(x1, y1, x2, y2, color, w) {
  ctx.fillStyle = color;
  ctx.fillRect(x1 - OX, y1 - OY, Math.max(x2 - x1, w), Math.max(y2 - y1, w));
}

ctx.fillStyle = '#9ba2aa';
ctx.fillRect(0, 0, canvas.width, canvas.height);

// major grid
[1081, 1890].forEach(x => line(x, 252, x, 1312, '#8e959d', 1));
line(63, 345, 2366, 345, '#8e959d', 1);
line(63, 1155, 272, 1155, '#7f868e', 1);
line(272, 1155, 272, 1312, '#747b83', 1);

// world axes
line(271, 252, 272, 345, '#4f9a4f', 2);
line(1081, 1154, 2366, 1154, '#8c4a4a', 2);

// left mesh, everything selected
const L = 272, T = 345, SIZE = 809, CELLS = 100;
ctx.fillStyle = '#d6d010';
ctx.fillRect(L - OX, T - OY, SIZE, SIZE + 1);
ctx.fillStyle = '#fff800';
for (let i = 0; i <= CELLS; i++) {
  const p = Math.round(i * SIZE / CELLS);
  ctx.fillRect(L - OX + p, T - OY, 1, SIZE + 1);
  ctx.fillRect(L - OX, T - OY + p, SIZE, 1);
}

function grip(x, y, color) {
  ctx.fillStyle = color;
  ctx.fillRect(x - OX - 2, y - OY - 2, 5, 5);
  ctx.fillStyle = '#fff';
  ctx.fillRect(x - OX - 1, y - OY - 1, 3, 3);
}

for (let i = 0; i <= CELLS; i++) {
  const p = Math.round(i * SIZE / CELLS);
  grip(L + p, T, '#c040ff');
  grip(L + p, T + 810, '#c040ff');
}
for (let i = 0; i <= CELLS; i++) {
  const p = Math.round(i * 810 / CELLS);
  grip(L, T + p, '#80ff00');
  grip(L + SIZE, T + p, '#80ff00');
}

// right mesh, stress field as a hue
const HUES = [[0, 150], [.2, 150], [.36, 140], [.5, 124], [.65, 98], [.8, 78], [.9, 60], [.95, 42], [1, 22], [1.04, 6], [1.07, 0]];

function lookup(r) {
  for (let i = 1; i < HUES.length; i++) {
    if (r < HUES[i][0]) {
      const a = HUES[i - 1], b = HUES[i];
      return a[1] + (b[1] - a[1]) * (r - a[0]) / (b[0] - a[0]);
    }
  }
  return 0;
}

function lobe(dx, dy, a, b) {
  const p = 3.2;
  return Math.pow(Math.pow(Math.abs(dx / a), p) + Math.pow(Math.abs(dy / b), p), 1 / p);
}

function hue(u, v) {
  const r = Math.min(
    lobe(u - .5, v, .32, .197),
    lobe(u - .5, 1 - v, .32, .197),
    lobe(u, v - .5, .197, .324),
    lobe(1 - u, v - .5, .197, .324)
  );
  const dx = (u - .5) / .22, dy = (v - .5) / .2;
  const rc = Math.pow(Math.pow(dx * dx, 2.5) + Math.pow(dy * dy, 2.5), .2);
  return Math.max(lookup(r), 42 * (1 - rc * rc));
}

function hueToRgb(h) {
  if (h < 60) return [255, h / 60 * 255, 0];
  if (h < 120) return [(120 - h) / 60 * 255, 255, 0];
  return [0, 255, (h - 120) / 60 * 255];
}

const RX = 1178, RY = 346, RS = 810;
const img = ctx.createImageData(RS, RS);
for (let y = 0; y < RS; y++) {
  for (let x = 0; x < RS; x++) {
    const c = hueToRgb(hue(x / RS, y / RS));
    const k = (y * RS + x) * 4;
    img.data[k] = c[0];
    img.data[k + 1] = c[1];
    img.data[k + 2] = c[2];
    img.data[k + 3] = 255;
  }
}
ctx.putImageData(img, RX - OX, RY - OY);

ctx.fillStyle = '#000';
for (let i = 0; i <= CELLS; i++) {
  const p = Math.min(Math.round(i * RS / CELLS), RS - 1);
  ctx.fillRect(RX - OX + p, RY - OY, 1, RS);
  ctx.fillRect(RX - OX, RY - OY + p, RS, 1);
}
```
